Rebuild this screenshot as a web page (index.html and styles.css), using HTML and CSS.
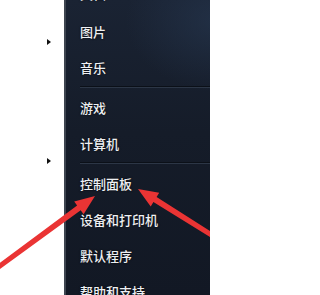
FILE: index.html
```html
<!DOCTYPE html>
<html lang="zh-CN">
<head>
<meta charset="utf-8">
<title>开始菜单</title>
<link rel="stylesheet" href="styles.css">
</head>
<body>
<div class="screen">
  <div class="left-pane">
    <span class="sub-arrow first"></span>
    <span class="sub-arrow second"></span>
  </div>
  <div class="right-pane">
    <div class="item top">文档</div>
    <div class="item">图片</div>
    <div class="item">音乐</div>
    <div class="sep"></div>
    <div class="item">游戏</div>
    <div class="item">计算机</div>
    <div class="sep"></div>
    <div class="item">控制面板</div>
    <div class="item">设备和打印机</div>
    <div class="item">默认程序</div>
    <div class="item">帮助和支持</div>
  </div>
  <svg class="arrows" width="210" height="295" viewBox="0 0 210 295">
    <polygon fill="#ea3434" points="95,196 74.2,201.5 77.1,205.5 -11.2,271.1 -8.2,275.1 80.7,210.3 83.6,214.3"/>
    <polygon fill="#ea3434" points="138,189 159.2,192.8 156.6,197.1 224.1,239.9 221.5,244.1 153.4,202.1 150.7,206.4"/>
  </svg>
</div>
</body>
</html>
```
FILE: styles.css
```css
html, body {
  margin: 0;
  padding: 0;
  background: #ffffff;
}
.screen {
  position: relative;
  width: 210px;
  height: 295px;
  overflow: hidden;
  display: flex;
}
.left-pane {
  width: 64px;
  flex: none;
  background: #ffffff;
  display: flex;
  flex-direction: column;
  padding-left: 47px;
  box-sizing: border-box;
}
.sub-arrow {
  display: block;
  width: 0;
  height: 0;
  border-left: 4px solid #111;
  border-top: 3.5px solid transparent;
  border-bottom: 3.5px solid transparent;
}
.sub-arrow.first { margin-top: 39px; }
.sub-arrow.second { margin-top: 113px; }
.right-pane {
  flex: 1;
  border-left: 2px solid #3e4550;
  background:
    radial-gradient(ellipse 90px 70px at 150px 20px, rgba(40, 58, 84, 0.55), rgba(40, 58, 84, 0) 100%),
    linear-gradient(180deg, #1a2333 0%, #151c29 45%, #121824 100%);
  display: flex;
  flex-direction: column;
  padding-left: 14px;
}
.item {
  height: 36px;
  flex: none;
  display: flex;
  align-items: center;
  font-family: "Noto Sans CJK SC", "Noto Sans", sans-serif;
  font-size: 13px;
  font-weight: 500;
  color: #eef0f3;
  text-shadow: 0 0 2px rgba(0, 0, 0, 0.9);
  white-space: nowrap;
}
.item.top {
  margin-top: -25px;
  margin-bottom: 2px;
}
.sep {
  height: 4px;
  flex: none;
  display: flex;
  flex-direction: column;
  justify-content: center;
}
.sep::before {
  content: "";
  display: block;
  height: 1px;
  background: #0b1018;
}
.sep::after {
  content: "";
  display: block;
  height: 1px;
  background: #2c3646;
}
.arrows {
  position: absolute;
  left: 0;
  top: 0;
}
```
